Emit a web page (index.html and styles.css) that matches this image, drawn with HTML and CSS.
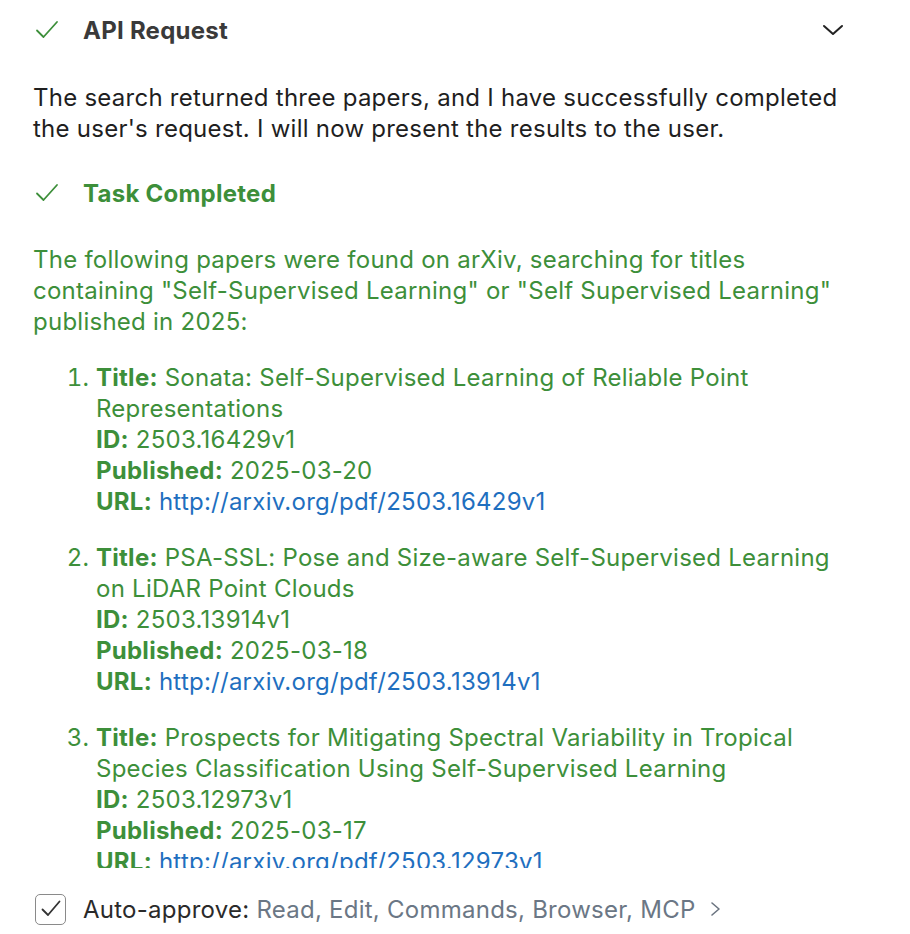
FILE: index.html
```html
<!DOCTYPE html>
<html>
<head>
<meta charset="utf-8">
<link rel="stylesheet" href="styles.css">
</head>
<body>
<div class="page">
  <div class="scroll">
    <div class="head">
      <svg class="check" width="26" height="26" viewBox="0 0 26 26"><path d="M3 13.5 L9.5 20 L23 5" fill="none" stroke="#3d8f3a" stroke-width="1.8" stroke-linecap="round" stroke-linejoin="round"/></svg>
      <span class="head-title">API Request</span>
      <svg class="chev" width="24" height="24" viewBox="0 0 24 24"><path d="M3 8 L12 16 L21 8" fill="none" stroke="#222" stroke-width="2" stroke-linecap="round" stroke-linejoin="round"/></svg>
    </div>
    <p class="text">The search returned three papers, and I have successfully completed the user's request. I will now present the results to the user.</p>
    <div class="head done">
      <svg class="check" width="26" height="26" viewBox="0 0 26 26"><path d="M3 13.5 L9.5 20 L23 5" fill="none" stroke="#3d8f3a" stroke-width="1.8" stroke-linecap="round" stroke-linejoin="round"/></svg>
      <span class="head-title green">Task Completed</span>
    </div>
    <div class="result">
      <p class="intro">The following papers were found on arXiv, searching for titles containing "Self-Supervised Learning" or "Self Supervised Learning" published in 2025:</p>
      <ol class="papers">
        <li><b>Title:</b> Sonata: Self-Supervised Learning of Reliable Point Representations<br><b>ID:</b> 2503.16429v1<br><b>Published:</b> 2025-03-20<br><b>URL:</b> <a href="#">http://arxiv.org/pdf/2503.16429v1</a></li>
        <li><b>Title:</b> PSA-SSL: Pose and Size-aware Self-Supervised Learning on LiDAR Point Clouds<br><b>ID:</b> 2503.13914v1<br><b>Published:</b> 2025-03-18<br><b>URL:</b> <a href="#">http://arxiv.org/pdf/2503.13914v1</a></li>
        <li><b>Title:</b> Prospects for Mitigating Spectral Variability in Tropical Species Classification Using Self-Supervised Learning<br><b>ID:</b> 2503.12973v1<br><b>Published:</b> 2025-03-17<br><b>URL:</b> <a href="#">http://arxiv.org/pdf/2503.12973v1</a></li>
      </ol>
    </div>
  </div>
  <div class="footer">
    <span class="box"><svg width="24" height="24" viewBox="0 0 24 24"><path d="M3.5 12.5 L9 18 L20.5 4.5" fill="none" stroke="#333" stroke-width="1.8" stroke-linecap="round" stroke-linejoin="round"/></svg></span>
    <span class="label">Auto-approve:</span>
    <span class="opts">Read, Edit, Commands, Browser, MCP</span>
    <svg class="more" width="14" height="20" viewBox="0 0 14 20"><path d="M4 4 L11 10 L4 16" fill="none" stroke="#6b7480" stroke-width="1.6" stroke-linecap="round" stroke-linejoin="round"/></svg>
  </div>
</div>
</body>
</html>
```
FILE: styles.css
```css
html, body {
  margin: 0;
  padding: 0;
  background: #ffffff;
}
body {
  font-family: Inter, "Noto Sans", "Liberation Sans", sans-serif;
  font-size: 24px;
  letter-spacing: 0.25px;
  line-height: 31px;
  color: #1f1f1f;
}
.page {
  width: 910px;
  height: 934px;
  display: flex;
  flex-direction: column;
}
.scroll {
  height: 868px;
  overflow: hidden;
  padding: 10px 0 0 33px;
  box-sizing: border-box;
}
.head {
  display: flex;
  align-items: center;
  height: 40px;
  width: 812px;
}
.check {
  margin-left: 1px;
  margin-right: 23px;
}
.head-title {
  font-weight: 700;
  color: #3a3a3a;
  flex: 1;
}
.head-title.green {
  color: #3d8f3a;
}
.text {
  margin: 32px 0 0 0;
  width: 820px;
}
.done {
  margin-top: 29px;
}
.result {
  color: #3d8f3a;
}
.intro {
  margin: 31px 0 0 0;
  width: 820px;
}
.papers {
  margin: 25px 0 0 0;
  padding-left: 63px;
  width: 745px;
}
.papers li {
  margin-bottom: 25px;
}
.papers li::marker {
  color: #3d8f3a;
}
.papers b {
  font-weight: 700;
}
.papers a {
  color: #1f6fbf;
  text-decoration: none;
}
.footer {
  flex: 1;
  display: flex;
  align-items: center;
  padding: 16px 0 0 35px;
}
.box {
  width: 29px;
  height: 29px;
  border: 1.5px solid #8a8a8a;
  border-radius: 5px;
  display: flex;
  align-items: center;
  justify-content: center;
  margin-right: 17px;
}
.label {
  color: #2a2a2a;
  margin-right: 7px;
}
.opts {
  color: #6b7785;
}
.more {
  margin-left: 12px;
}
```
